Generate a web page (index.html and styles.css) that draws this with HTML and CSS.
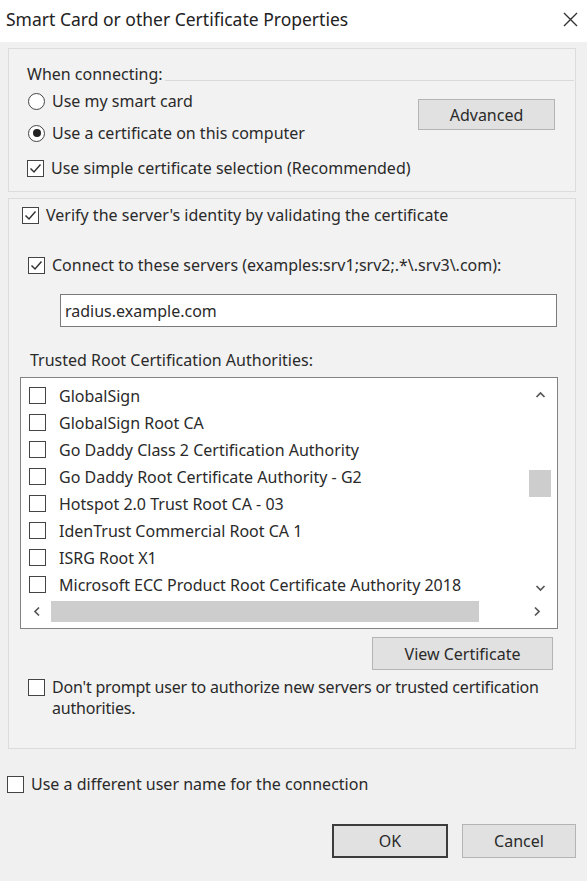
FILE: index.html
```html
<!DOCTYPE html>
<html lang="en">
<head>
<meta charset="UTF-8" />
<meta name="viewport" content="width=device-width, initial-scale=1" />
<title>Smart Card or other Certificate Properties</title>
<link rel="stylesheet" href="styles.css">
</head>
<body>
<div class="titlebar">
  <span class="title">Smart Card or other Certificate Properties</span>
  <span class="close">
    <svg width="15" height="15" viewBox="0 0 15 15"><path d="M1 1 L14 14 M14 1 L1 14" stroke="#333" stroke-width="1.4" fill="none"/></svg>
  </span>
</div>

<div class="dialog">
  <div class="panel panel-connect">
    <div class="group-head"><span>When connecting:</span></div>
    <div class="connect-row">
      <div class="options">
        <div class="opt opt-first"><span class="radio"></span>Use my smart card</div>
        <div class="opt opt-second"><span class="radio on"></span>Use a certificate on this computer</div>
      </div>
      <button class="btn btn-advanced">Advanced</button>
    </div>
    <div class="opt opt-simple">
      <span class="check"><svg width="15" height="15" viewBox="0 0 15 15"><polyline points="2.5,7.5 6,11 12.5,3.5" stroke="#333" stroke-width="1.5" fill="none"/></svg></span>
      Use simple certificate selection (Recommended)
    </div>
  </div>

  <div class="panel panel-verify">
    <div class="opt opt-verify">
      <span class="check"><svg width="15" height="15" viewBox="0 0 15 15"><polyline points="2.5,7.5 6,11 12.5,3.5" stroke="#333" stroke-width="1.5" fill="none"/></svg></span>
      Verify the server's identity by validating the certificate
    </div>
    <div class="opt opt-servers">
      <span class="check"><svg width="15" height="15" viewBox="0 0 15 15"><polyline points="2.5,7.5 6,11 12.5,3.5" stroke="#333" stroke-width="1.5" fill="none"/></svg></span>
      Connect to these servers (examples:srv1;srv2;.*\.srv3\.com):
    </div>
    <div class="textbox">radius.example.com</div>
    <div class="list-label">Trusted Root Certification Authorities:</div>

    <div class="listbox">
      <div class="list-main">
        <div class="list-items">
          <div class="item"><span class="check"></span>GlobalSign</div>
          <div class="item"><span class="check"></span>GlobalSign Root CA</div>
          <div class="item"><span class="check"></span>Go Daddy Class 2 Certification Authority</div>
          <div class="item"><span class="check"></span>Go Daddy Root Certificate Authority - G2</div>
          <div class="item"><span class="check"></span>Hotspot 2.0 Trust Root CA - 03</div>
          <div class="item"><span class="check"></span>IdenTrust Commercial Root CA 1</div>
          <div class="item"><span class="check"></span>ISRG Root X1</div>
          <div class="item"><span class="check"></span>Microsoft ECC Product Root Certificate Authority 2018</div>
        </div>
        <div class="vscroll">
          <svg class="arrow" width="11" height="8" viewBox="0 0 11 8"><polyline points="1.5,6 5.5,2 9.5,6" stroke="#555" stroke-width="1.7" fill="none"/></svg>
          <div class="vtrack"><div class="vthumb"></div></div>
          <svg class="arrow" width="11" height="8" viewBox="0 0 11 8"><polyline points="1.5,2 5.5,6 9.5,2" stroke="#555" stroke-width="1.7" fill="none"/></svg>
        </div>
      </div>
      <div class="hscroll">
        <svg class="arrow" width="8" height="11" viewBox="0 0 8 11"><polyline points="6,1.5 2,5.5 6,9.5" stroke="#555" stroke-width="1.7" fill="none"/></svg>
        <div class="htrack"><div class="hthumb"></div></div>
        <svg class="arrow" width="8" height="11" viewBox="0 0 8 11"><polyline points="2,1.5 6,5.5 2,9.5" stroke="#555" stroke-width="1.7" fill="none"/></svg>
      </div>
    </div>

    <div class="view-row">
      <button class="btn btn-view">View Certificate</button>
    </div>
    <div class="opt opt-prompt">
      <span class="check"></span>
      <span class="prompt-text">Don't prompt user to authorize new servers or trusted certification authorities.</span>
    </div>
  </div>

  <div class="opt opt-user"><span class="check"></span>Use a different user name for the connection</div>

  <div class="footer">
    <button class="btn btn-ok">OK</button>
    <button class="btn btn-cancel">Cancel</button>
  </div>
</div>
</body>
</html>
```

FILE: styles.css
```css
* {
  margin: 0; padding: 0; box-sizing: border-box;
}
body {
  width: 587px;
  height: 881px;
  background: #f0f0f0;
  color: #2a2a2a;
  font-family: 'Noto Sans', 'Liberation Sans', sans-serif;
  font-size: 16px;
  overflow: hidden;
}
.titlebar {
  height: 42px;
  background: #fff;
  display: flex;
  align-items: center;
  justify-content: space-between;
  padding: 0 9px 4px 6px;
}
.title {
  font-size: 17.5px;
  color: #222;
}
.close {
  display: flex;
}
.dialog {
  padding: 6px 11px 0 8px;
}
.panel {
  border: 1px solid #dcdcdc;
  background: #f2f2f2;
}

/* shared option rows */
.opt {
  display: flex;
  align-items: center;
  height: 24px;
  white-space: nowrap;
}
.check, .radio {
  flex: none;
  width: 17px;
  height: 17px;
  border: 1px solid #444;
  background: #fff;
  margin-right: 7px;
  display: flex;
  align-items: center;
  justify-content: center;
}
.radio {
  border-radius: 50%;
}
.radio.on::after {
  content: "";
  width: 8px;
  height: 8px;
  border-radius: 50%;
  background: #222;
}

.btn {
  font-family: inherit;
  font-size: 16px;
  color: #2a2a2a;
  background: #e1e1e1;
  border: 1px solid #b4b4b4;
}

/* first panel */
.panel-connect {
  padding: 15px 20px 11px 18px;
}
.group-head {
  display: flex;
  align-items: center;
  height: 20px;
  margin-right: -19px;
}
.group-head::after {
  content: "";
  flex: 1;
  height: 1px;
  background: #dadada;
  margin: 12px 0 0 2px;
}
.connect-row {
  display: flex;
  justify-content: space-between;
}
.opt-first {
  margin-top: 5px;
  margin-left: 1px;
}
.opt-second {
  margin-top: 8px;
  margin-left: 1px;
}
.btn-advanced {
  width: 137px;
  height: 31px;
  margin-top: 15px;
}
.opt-simple {
  margin-top: 11px;
}

/* second panel */
.panel-verify {
  margin-top: 6px;
  padding: 4px 18px 29px 11px;
}
.opt-verify {
  margin-left: 2px;
}
.opt-servers {
  margin-top: 26px;
  margin-left: 8px;
}
.textbox {
  margin: 17px 0 0 40px;
  height: 33px;
  background: #fff;
  border: 1px solid #7a7a7a;
  padding-left: 4px;
  display: flex;
  align-items: center;
}
.list-label {
  margin: 23px 0 0 10px;
  height: 20px;
  line-height: 20px;
}
.listbox {
  margin-top: 7px;
  width: 538px;
  height: 252px;
  background: #fff;
  border: 1px solid #828282;
  padding: 4px 6px 0 8px;
}
.list-main {
  display: flex;
}
.list-items {
  flex: 1;
}
.item {
  display: flex;
  align-items: center;
  height: 27px;
  white-space: nowrap;
}
.item .check {
  margin-right: 13px;
}
.vscroll {
  width: 22px;
  display: flex;
  flex-direction: column;
  align-items: center;
  padding-top: 9px;
}
.vtrack {
  flex: 1;
  width: 100%;
  padding-top: 65px;
}
.vthumb {
  height: 27px;
  background: #cdcdcd;
}
.vscroll .arrow {
  margin-bottom: 6px;
}
.hscroll {
  display: flex;
  align-items: center;
  height: 21px;
  margin-top: 3px;
}
.hscroll .arrow {
  margin: 0 10px 0 4px;
}
.htrack {
  flex: 1;
  height: 100%;
  padding-right: 50px;
}
.hthumb {
  height: 100%;
  background: #cdcdcd;
}
.view-row {
  display: flex;
  justify-content: flex-end;
  margin-top: 8px;
}
.btn-view {
  width: 181px;
  height: 33px;
  margin-right: 4px;
}
.opt-prompt {
  height: auto;
  align-items: flex-start;
  margin: 7px 0 0 8px;
  white-space: normal;
  line-height: 21px;
}
.opt-prompt .check {
  margin-top: 2px;
}
.prompt-text {
  max-width: 505px;
  letter-spacing: -0.2px;
}

/* bottom */
.opt-user {
  margin: 23px 0 0 -1px;
}
.footer {
  display: flex;
  justify-content: flex-end;
  gap: 14px;
  margin-top: 28px;
}
.btn-ok, .btn-cancel {
  height: 34px;
}
.btn-ok {
  width: 116px;
  border: 2px solid #3c3c3c;
}
.btn-cancel {
  width: 114px;
}
```
